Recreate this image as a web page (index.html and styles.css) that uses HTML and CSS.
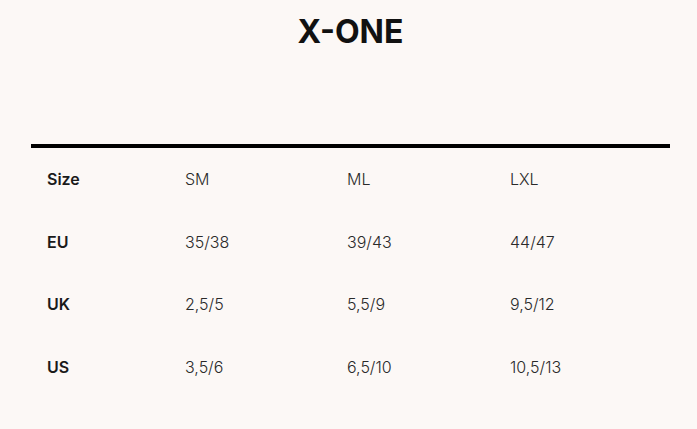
FILE: index.html
```html
<!DOCTYPE html>
<html>
<head>
<meta charset="utf-8">
<link rel="stylesheet" href="styles.css">
</head>
<body>
<h1 class="title">X-ONE</h1>
<table class="sizes">
  <colgroup>
    <col class="c1"><col class="c2"><col class="c3"><col class="c4">
  </colgroup>
  <tbody>
    <tr><th>Size</th><td>SM</td><td>ML</td><td>LXL</td></tr>
    <tr><th>EU</th><td>35/38</td><td>39/43</td><td>44/47</td></tr>
    <tr><th>UK</th><td>2,5/5</td><td>5,5/9</td><td>9,5/12</td></tr>
    <tr><th>US</th><td>3,5/6</td><td>6,5/10</td><td>10,5/13</td></tr>
  </tbody>
</table>
</body>
</html>
```
FILE: styles.css
```css
html, body {
  margin: 0;
  padding: 0;
  background: #fcf8f6;
}
body {
  font-family: Inter, "Liberation Sans", sans-serif;
  color: #222;
  padding: 0 27px 0 31px;
}
.title {
  margin: 0;
  padding-top: 13px;
  text-align: center;
  font-size: 32px;
  font-weight: 700;
  line-height: 38px;
  color: #111;
  letter-spacing: 0;
}
.sizes {
  margin-top: 93px;
  width: 639px;
  border-collapse: collapse;
  border-top: 4px solid #000;
  table-layout: fixed;
}
.c1 { width: 138px; }
.c2 { width: 162px; }
.c3 { width: 163px; }
.c4 { width: 176px; }
.sizes th, .sizes td {
  text-align: left;
  padding: 0 16px;
  height: 62.5px;
  font-size: 16px;
  vertical-align: middle;
}
.sizes th {
  font-weight: 600;
  color: #1a1a1a;
}
.sizes td {
  font-weight: 300;
  color: #2a2a2a;
}
```
